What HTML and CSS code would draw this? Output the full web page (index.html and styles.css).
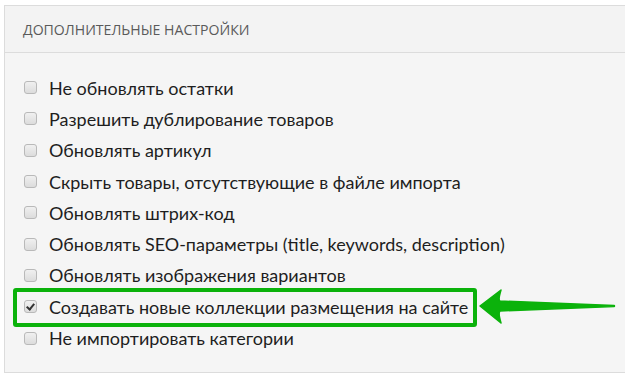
FILE: index.html
```html
<!DOCTYPE html>
<html lang="ru">
<head>
    <meta charset="UTF-8">
    <title>Дополнительные настройки</title>
    <link rel="stylesheet" href="styles.css">
</head>
<body>
    <!-- Блок дополнительных настроек импорта -->
    <div class="panel">
        <div class="panel-head">Дополнительные настройки</div>
        <ul class="options">
            <li class="option"><span class="box"></span>Не обновлять остатки</li>
            <li class="option"><span class="box"></span>Разрешить дублирование товаров</li>
            <li class="option"><span class="box"></span>Обновлять артикул</li>
            <li class="option"><span class="box"></span>Скрыть товары, отсутствующие в файле импорта</li>
            <li class="option"><span class="box"></span>Обновлять штрих-код</li>
            <li class="option"><span class="box"></span>Обновлять SEO-параметры (title, keywords, description)</li>
            <li class="option"><span class="box"></span>Обновлять изображения вариантов</li>
            <li class="option marked">
                <span class="box checked"></span>Создавать новые коллекции размещения на сайте
                <!-- стрелка-указатель -->
                <svg class="arrow" width="140" height="40" viewBox="0 0 140 40">
                    <path d="M1 18 L22 2 Q19 12 21 13 L135 17.5 Q136 18 135 18.5 L21 23 Q19 25 22 35 Z" fill="#0bb20b" stroke="#0bb20b" stroke-width="1.5" stroke-linejoin="round"/>
                </svg>
            </li>
            <li class="option"><span class="box"></span>Не импортировать категории</li>
        </ul>
    </div>
</body>
</html>
```

FILE: styles.css
```css
body {
    margin: 0;
    padding: 0;
    background: #fff;
    overflow: hidden;
}
.panel {
    margin: 5px -20px 0 4px;
    border: 1px solid #dcdcdc;
    background: #f5f5f5;
    height: 366px;
}
.panel-head {
    height: 46px;
    line-height: 48px;
    padding-left: 18px;
    background: #f3f3f3;
    border-bottom: 1px solid #dcdcdc;
    font-family: "Open Sans", sans-serif;
    font-size: 14.1px;
    color: #5a5a5a;
    text-transform: uppercase;
}
.options {
    list-style: none;
    margin: 0;
    padding: 19px 0 0 19px;
}
.option {
    position: relative;
    display: flex;
    align-items: center;
    height: 31.3px;
    font-family: Lato, sans-serif;
    font-size: 18px;
    color: #1e1e1e;
}
.box {
    width: 11px;
    height: 11px;
    margin-right: 12px;
    border: 1px solid #b9b9b9;
    border-radius: 3px;
    background: linear-gradient(#f0f0f0, #dcdcdc);
    position: relative;
}
.box.checked::after {
    content: "";
    position: absolute;
    left: 3px;
    top: 1px;
    width: 3px;
    height: 6px;
    border: solid #333;
    border-width: 0 2px 2px 0;
    transform: rotate(40deg);
}
/* рамка вокруг выделенного пункта */
.marked::before {
    content: "";
    position: absolute;
    left: -11px;
    top: -3px;
    width: 456px;
    height: 31px;
    border: 4px solid #0bb20b;
    border-radius: 3px;
}
.arrow {
    position: absolute;
    left: 455px;
    top: -3px;
}
```
